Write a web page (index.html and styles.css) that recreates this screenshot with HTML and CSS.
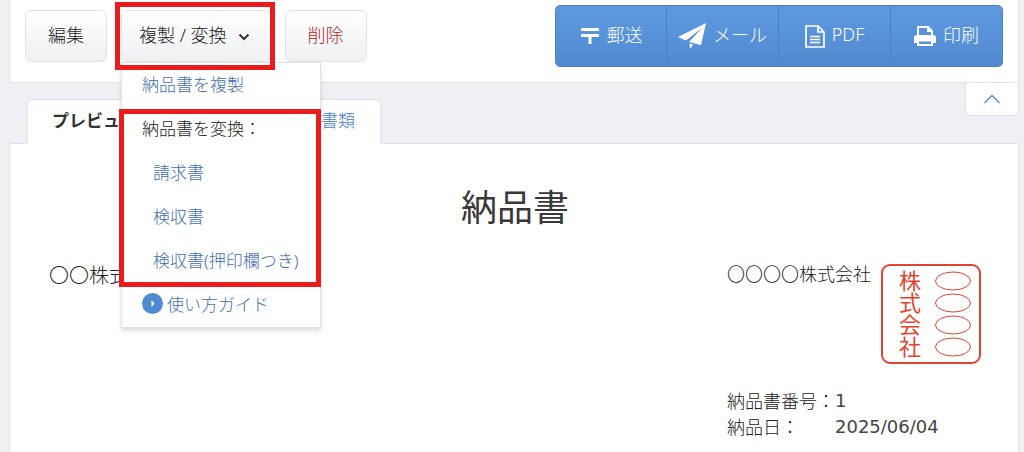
FILE: index.html
```
<!DOCTYPE html>
<html lang="ja">
  <head>
    <meta charset="utf-8">
    <title>納品書</title>
    <link rel="stylesheet" href="styles.css">
  </head>
  <body>
    <header class="toolbar">
      <div class="actions">
        <button type="button" class="btn">編集</button>
        <div class="dropdown">
          <button type="button" class="btn btn-convert">
            複製 / 変換
            <svg class="chevron" viewBox="0 0 12 8" width="12" height="8">
              <path d="M1.500 1.500L6 6l4.500-4.500" />
            </svg>
          </button>
          <div class="menu">
            <a href="#" class="menu-item">納品書を複製</a>
            <div class="menu-group">
              <div class="menu-item menu-label">納品書を変換：</div>
              <a href="#" class="menu-item menu-sub">請求書</a>
              <a href="#" class="menu-item menu-sub">検収書</a>
              <a href="#" class="menu-item menu-sub">検収書(押印欄つき)</a>
            </div>
            <a href="#" class="menu-item">
              <svg class="guide-icon" viewBox="0 0 21 21" width="21" height="21">
                <circle cx="10.500" cy="10.500" r="10.500" fill="#4f8bd3" />
                <path d="M9.500 7l3 3.500-3 3.500z" fill="#fff" />
              </svg>
              使い方ガイド
            </a>
          </div>
        </div>
        <button type="button" class="btn btn-delete">削除</button>
      </div>

      <div class="send-group">
        <button type="button" class="send">
          <svg viewBox="0 0 20 18" width="20" height="18">
            <path d="M1 2.500h18M1 8.500h18M10 8v9" fill="none" stroke="#fff" stroke-width="3" />
          </svg>
          郵送
        </button>
        <button type="button" class="send">
          <svg viewBox="0 0 28 26" width="28" height="26">
            <path d="M28 0L0 14l8 3.500L24 5 11 19l12 3zM11.500 20.500l3.500 1-3 4.500z" fill="#fff" />
          </svg>
          メール
        </button>
        <button type="button" class="send">
          <svg viewBox="0 0 20 23" width="20" height="23">
            <path d="M1 1h12l6 6v15H1zM13 1v6h6M5 11.500h10M5 14.500h10M5 17.500h10" fill="none" stroke="#fff" stroke-width="1.700" />
          </svg>
          PDF
        </button>
        <button type="button" class="send">
          <svg viewBox="0 0 22 20" width="22" height="20">
            <path d="M4 10V1h10l4 4v5" fill="none" stroke="#fff" stroke-width="2" />
            <path d="M13 1v5h5z" fill="#fff" />
            <path d="M3 9h16a3 3 0 0 1 3 3v5h-4v-3H4v3H0v-5a3 3 0 0 1 3-3z" fill="#fff" />
            <path d="M4 14.500h14V19H4z" fill="none" stroke="#fff" stroke-width="2" />
          </svg>
          印刷
        </button>
      </div>
    </header>

    <div class="subbar">
      <nav class="tabs">
        <a href="#" class="tab tab-active">プレビュー</a>
        <a href="#" class="tab">書類</a>
      </nav>
      <button type="button" class="collapse" aria-label="閉じる">
        <svg viewBox="0 0 18 10" width="18" height="10">
          <path d="M1.500 9L9 1.500 16.500 9" />
        </svg>
      </button>
    </div>

    <main class="paper">
      <h1 class="title">納品書</h1>
      <div class="parties">
        <div class="customer">〇〇株式会社</div>
        <div class="issuer">
          <div class="company">
            <span>〇〇〇〇株式会社</span>
            <div class="seal">
              <div class="seal-text">株式会社</div>
              <svg class="seal-marks" viewBox="0 0 38 88" width="38" height="88">
                <ellipse cx="19" cy="11" rx="17.500" ry="9" />
                <ellipse cx="19" cy="33" rx="17.500" ry="9" />
                <ellipse cx="19" cy="55" rx="17.500" ry="9" />
                <ellipse cx="19" cy="77" rx="17.500" ry="9" />
              </svg>
            </div>
          </div>
          <dl class="meta">
            <dt>納品書番号：</dt>
            <dd>1</dd>
            <dt>納品日：</dt>
            <dd>2025/06/04</dd>
          </dl>
        </div>
      </div>
    </main>
  </body>
</html>
```
FILE: styles.css
```
* {
  box-sizing: border-box;
}

body {
  margin: 0;
  padding: 0 5px 0 9px;
  background: #eff0f4;
  color: #222;
  font-family: "Noto Sans", "Noto Sans CJK JP", sans-serif;
  font-size: 18px;
  font-weight: 300;
}

a {
  color: #3f6eae;
  text-decoration: none;
}

button {
  font: inherit;
  cursor: pointer;
}

/* toolbar */
.toolbar {
  display: flex;
  justify-content: space-between;
  align-items: flex-start;
  padding: 5px 15px 15px;
  background: #fff;
  border: 1px solid #dfe1e5;
  border-top: 0;
}

.actions {
  display: flex;
  gap: 14px;
  padding-top: 5px;
}

.btn {
  height: 52px;
  padding: 0 22px 4px;
  border: 1px solid #dfe1e5;
  border-radius: 6px;
  background: linear-gradient(#fff, #eff0f3);
  color: #222;
}

.btn-convert {
  display: flex;
  align-items: center;
  gap: 11px;
  padding: 0 20px 4px 17px;
}

.btn-delete {
  color: #ae2422;
}

.chevron {
  margin-top: 5px;
  fill: none;
  stroke: #333;
  stroke-width: 2;
}

.dropdown {
  position: relative;
}

.dropdown::after {
  content: "";
  position: absolute;
  inset: -8px -4px -8px -6px;
  z-index: 3;
  border: 5px solid #e81c1c;
  pointer-events: none;
}

.menu {
  position: absolute;
  top: 100%;
  left: 0;
  z-index: 2;
  width: 200px;
  background: #fff;
  border: 1px solid #dfe1e5;
  box-shadow: 0 3px 4px rgba(0, 0, 0, 0.12);
  font-size: 17px;
}

.menu-item {
  display: flex;
  align-items: center;
  gap: 4px;
  height: 44px;
  padding: 0 0 4px 20px;
  white-space: nowrap;
}

.menu-sub {
  padding-left: 31px;
}

.menu-group {
  position: relative;
}

.menu-group::after {
  content: "";
  position: absolute;
  inset: 2px -1px -4px -3px;
  border: 5px solid #e81c1c;
  pointer-events: none;
}

.send-group {
  display: flex;
  border: 1px solid #4a82c4;
  border-radius: 5px;
  background: linear-gradient(#5e99df, #528ad0);
}

.send {
  display: flex;
  justify-content: center;
  align-items: center;
  gap: 7px;
  width: 112px;
  height: 60px;
  padding: 0 0 4px;
  border: 0;
  background: none;
  color: #fff;
  white-space: nowrap;
}

.send:first-child {
  width: 110px;
}

.send + .send {
  border-left: 1px solid #4a82c4;
}

.send svg {
  margin-top: 4px;
}

/* tabs */
.subbar {
  display: flex;
  justify-content: space-between;
  align-items: flex-start;
}

.tabs {
  display: flex;
  justify-content: space-between;
  width: 354px;
  height: 45px;
  margin: 16px 0 -1px 18px;
  padding: 0 25px 0 24px;
  background: #fff;
  border: 1px solid #dfe1e5;
  border-bottom: 0;
  border-radius: 5px 5px 0 0;
  position: relative;
}

.tab {
  color: #3f7bcb;
  font-size: 17px;
  line-height: 42px;
}

.tab-active {
  color: #333;
  font-weight: bold;
}

.collapse {
  width: 54px;
  height: 33px;
  background: #fff;
  border: 1px solid #dfe1e5;
  border-top: 0;
  border-radius: 0 0 5px 5px;
}

.collapse svg {
  display: block;
  margin: 0 auto;
  fill: none;
  stroke: #5a8fd6;
  stroke-width: 1.500;
}

/* document */
.paper {
  min-height: 308px;
  padding: 36px 37px 12px 39px;
  background: #fff;
  border: 1px solid #dfe1e5;
  border-bottom: 0;
}

.title {
  margin: 0 0 28px;
  color: #383838;
  font-size: 36px;
  font-weight: normal;
  line-height: 56px;
  text-align: center;
}

.parties {
  display: flex;
  justify-content: space-between;
}

.customer {
  font-size: 20px;
  line-height: 24px;
}

.company {
  display: flex;
  gap: 10px;
  line-height: 20px;
}

.seal {
  display: flex;
  justify-content: space-between;
  width: 100px;
  height: 100px;
  padding: 4px 7px 4px 4px;
  border: 2px solid #e2452f;
  border-radius: 9px;
  color: #e2452f;
}

.seal-text {
  width: 44px;
  font-size: 22px;
  font-weight: normal;
  line-height: 44px;
  writing-mode: vertical-rl;
}

.seal-marks {
  fill: none;
  stroke: #e2452f;
  stroke-width: 1;
}

.meta {
  display: grid;
  grid-template-columns: 108px auto;
  margin: 24px 0 0;
  line-height: 26px;
}

.meta dt {
  white-space: nowrap;
}

.meta dd {
  margin: 0;
  color: #444;
  font-family: "DejaVu Sans", sans-serif;
  font-weight: normal;
}
```
